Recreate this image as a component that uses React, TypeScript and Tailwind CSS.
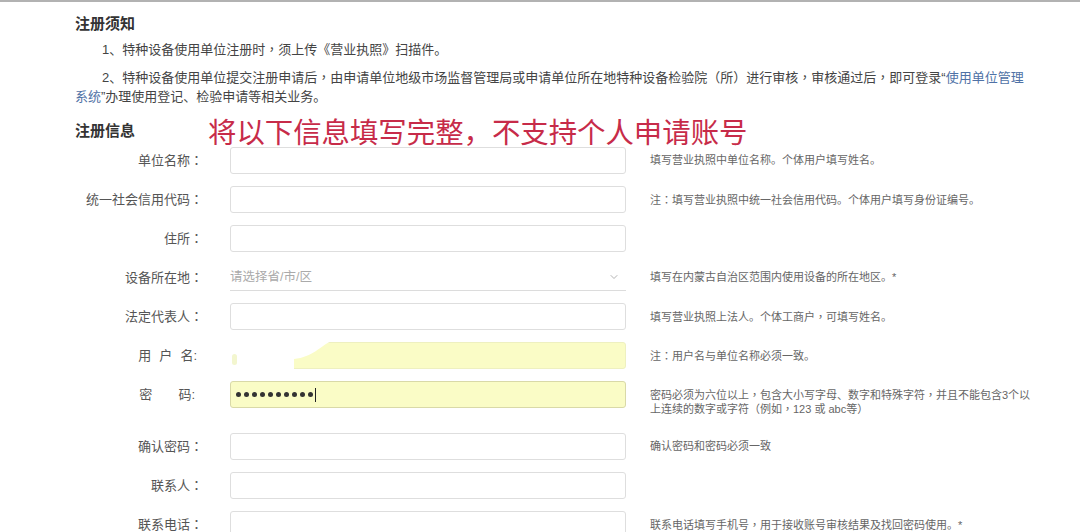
import React from "react";
import { ChevronDown } from "lucide-react";

const font = '"Liberation Sans", "Noto Sans CJK SC", sans-serif';
const tc = '"Noto Sans CJK TC", sans-serif';

function T({ t }: { t: string }) {
  const parts = t.split(/([，：])/);
  return (
    <>
      {parts.map((p, i) =>
        p === "，" || p === "：" ? (
          <span key={i} style={{ fontFamily: tc }}>
            {p}
          </span>
        ) : (
          <React.Fragment key={i}>{p}</React.Fragment>
        )
      )}
    </>
  );
}

function Row({
  label,
  children,
  hint,
  tall,
}: {
  label: React.ReactNode;
  children: React.ReactNode;
  hint?: React.ReactNode;
  tall?: boolean;
}) {
  return (
    <div className={`flex items-start ${tall ? "h-[52px]" : "h-[39px]"}`}>
      <div className="w-[128px] h-[27px] flex items-center justify-end text-[13px] text-[#555] whitespace-nowrap">
        {label}
      </div>
      <div className="ml-[27px] w-[396px] h-[27px] relative">{children}</div>
      {hint && (
        <div className="ml-[24px] pt-[6px] text-[11px] leading-[14px] text-[#666] whitespace-nowrap">
          {hint}
        </div>
      )}
    </div>
  );
}

function Label({ t }: { t: string }) {
  return (
    <span>
      {t}
      <span style={{ fontFamily: tc }}>：</span>
    </span>
  );
}

function Input() {
  return <div className="w-full h-full border border-[#dedede] rounded-[3px] bg-white" />;
}

export default function App() {
  return (
    <div
      className="w-[1080px] h-[532px] overflow-hidden bg-white border-t-2 border-[#b2b2b2]"
      style={{ fontFamily: font }}
    >
      <div className="pl-[75px] pt-[12px]">
        <div className="h-[20px] text-[15px] leading-[20px] font-bold text-[#333]">注册须知</div>
        <div className="mt-[5px] text-[13px] leading-[20px] text-[#444] whitespace-nowrap">
          <div className="h-[20px] pl-[27px]">
            <T t="1、特种设备使用单位注册时，须上传《营业执照》扫描件。" />
          </div>
          <div className="mt-[8px]">
            <div className="h-[20px] pl-[27px]">
              <T t="2、特种设备使用单位提交注册申请后，由申请单位地级市场监督管理局或申请单位所在地特种设备检验院（所）进行审核，审核通过后，即可登录“" />
              <span className="text-[#4f72a6]">使用单位管理</span>
            </div>
            <div className="h-[20px]">
              <span className="text-[#4f72a6]">系统</span>”办理使用登记、检验申请等相关业务。
            </div>
          </div>
        </div>
        <div className="mt-[8px] h-[32px] flex items-center">
          <div className="w-[60px] text-[15px] font-bold text-[#333] whitespace-nowrap">注册信息</div>
          <div
            className="ml-[73px] h-[32px] text-[28.4px] leading-[32px] text-[#c72b49] whitespace-nowrap"
            style={{ fontFamily: '"Noto Sans CJK SC", sans-serif' }}
          >
            将以下信息填写完整，不支持个人申请账号
          </div>
        </div>

        <Row label={<Label t="单位名称" />} hint={<T t="填写营业执照中单位名称。个体用户填写姓名。" />}>
          <Input />
        </Row>
        <Row
          label={<Label t="统一社会信用代码" />}
          hint={<T t="注：填写营业执照中统一社会信用代码。个体用户填写身份证编号。" />}
        >
          <Input />
        </Row>
        <Row label={<Label t="住所" />}>
          <Input />
        </Row>
        <Row label={<Label t="设备所在地" />} hint={<T t="填写在内蒙古自治区范围内使用设备的所在地区。*" />}>
          <div className="w-full h-full border-b border-[#dcdcdc] flex items-center justify-between pr-[6px]">
            <span className="text-[12.5px] text-[#aaa]">请选择省/市/区</span>
            <ChevronDown size={12} strokeWidth={1.5} className="text-[#999]" />
          </div>
        </Row>
        <Row label={<Label t="法定代表人" />} hint={<T t="填写营业执照上法人。个体工商户，可填写姓名。" />}>
          <Input />
        </Row>
        <Row
          label={
            <span className="flex gap-[8px] pr-[6px]">
              <span>用</span>
              <span>户</span>
              <span>名:</span>
            </span>
          }
          hint={<T t="注：用户名与单位名称必须一致。" />}
        >
          <div className="w-full h-full rounded-[3px] bg-[#fafcc6] border border-[#eef0c0]" />
          <svg className="absolute inset-0" width="396" height="27" viewBox="0 0 396 27">
            <path d="M-1 -1 H104 C 94 -1, 86 15, 64 17 V28 H-1 Z" fill="#ffffff" />
          </svg>
          <div className="absolute left-[2px] top-[12px] w-[5px] h-[11px] rounded-full bg-[#f3f6cf]" />
        </Row>
        <Row
          tall
          label={
            <span className="pr-[8px]">
              密{"\u3000\u3000"}码:
            </span>
          }
          hint={
            <>
              <div className="h-[14px]">
                <T t="密码必须为六位以上，包含大小写字母、数字和特殊字符，并且不能包含3个以" />
              </div>
              <div className="h-[14px]">
                <T t="上连续的数字或字符（例如，123 或 abc等）" />
              </div>
            </>
          }
        >
          <div className="w-full h-full rounded-[3px] bg-[#fafcc6] border border-[#d9d9a8] flex items-center pl-[5px]">
            <div className="flex gap-[3px]">
              {Array.from({ length: 10 }).map((_, i) => (
                <span key={i} className="w-[5px] h-[5px] rounded-full bg-[#333]" />
              ))}
            </div>
            <span className="ml-[2px] w-[1px] h-[14px] bg-[#222]" />
          </div>
        </Row>
        <Row label={<Label t="确认密码" />} hint="确认密码和密码必须一致">
          <Input />
        </Row>
        <Row label={<Label t="联系人" />}>
          <Input />
        </Row>
        <Row
          label={<Label t="联系电话" />}
          hint={<T t="联系电话填写手机号，用于接收账号审核结果及找回密码使用。*" />}
        >
          <Input />
        </Row>
      </div>
    </div>
  );
}
